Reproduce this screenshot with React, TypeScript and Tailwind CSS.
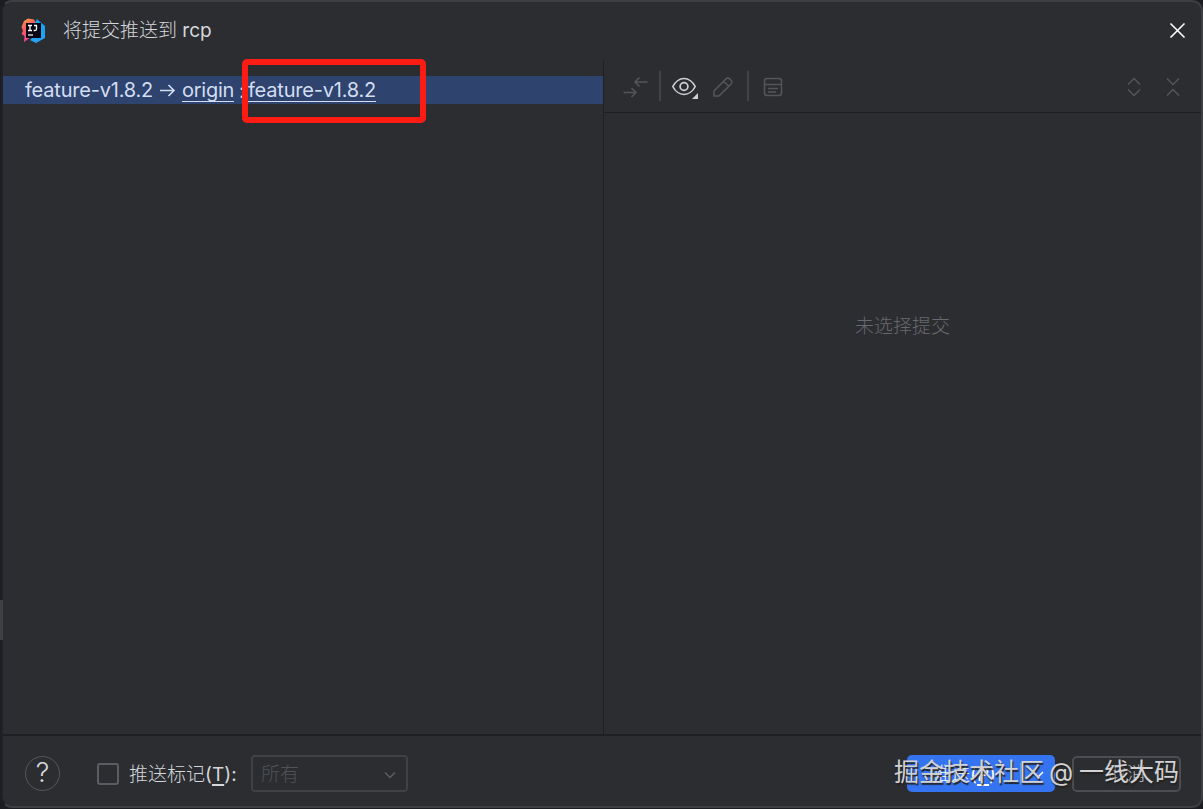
import type { ReactNode } from 'react';

function IdeaLogo() {
  return (
    <svg width="25" height="26" viewBox="0 0 25 26" className="shrink-0">
      <defs>
        <linearGradient id="warm" x1="0" y1="0" x2="0.4" y2="1">
          <stop offset="0" stopColor="#fdb43b" />
          <stop offset="0.4" stopColor="#f9605f" />
          <stop offset="1" stopColor="#f0429a" />
        </linearGradient>
        <linearGradient id="cool" x1="0" y1="0" x2="0" y2="1">
          <stop offset="0" stopColor="#12a6f5" />
          <stop offset="1" stopColor="#27a0f5" />
        </linearGradient>
      </defs>
      <path d="M3 3 7 .5l6 1 2 3.500-5 14-7 5 .5-6L.5 16l1.500-3L.5 9Z" fill="url(#warm)" />
      <path d="m16 1 2.500 2.500L24 8v12l-9 5-6-3 6-6-1-11Z" fill="url(#cool)" />
      <path d="M5 5h15v15H5z" fill="#090613" />
      <path d="M7 7.500h4M9 7.500v5M7 12.500h4M13 7.500h3M15.500 7.500v3.500q0 1.500-1.500 1.500h-1.300" fill="none" stroke="#fff" strokeWidth="1.3" />
      <path d="M7 17h5" stroke="#fff" strokeWidth="1.2" />
    </svg>
  );
}

function Icon({ size = 20, className = '', children }: { size?: number; className?: string; children: ReactNode }) {
  return (
    <svg
      width={size}
      height={size}
      viewBox={`0 0 ${size} ${size}`}
      fill="none"
      stroke="currentColor"
      strokeWidth="1.5"
      className={`shrink-0 overflow-visible ${className}`}
    >
      {children}
    </svg>
  );
}

function TitleBar() {
  return (
    <div className="flex h-[58px] shrink-0 items-center pr-[15px] pl-[18px]">
      <IdeaLogo />
      <span className="ml-[17px] text-[#d5d7dc]">
        <span className="font-light">将提交推送到</span> rcp
      </span>
      <Icon size={16} className="ml-auto text-white">
        <path d="m.5 .5 14 14M14.500 .5l-14 14" strokeWidth="1.6" />
      </Icon>
    </div>
  );
}

function BranchList() {
  return (
    <div className="w-[600px] shrink-0 pt-[16px]">
      <div className="relative flex h-[28px] items-center bg-[#2e436e] pl-[22px] text-[20px] whitespace-nowrap text-[#d3def1]">
        <span className="w-[128px] tracking-[-0.2px]">feature-v1.8.2</span>
        <Icon size={16} className="ml-[6px]">
          <path d="M1 8.500h14M9.500 3l5.500 5.500L9.500 14" strokeWidth="1.6" />
        </Icon>
        <span className="ml-[7px] w-[52px] border-b border-[#d3def1] pt-px leading-[21px] tracking-[-0.25px]">origin</span>
        <span className="ml-[5px] w-[9px] pt-px">:</span>
        <span className="w-[128px] border-b border-[#d3def1] pt-px leading-[21px] tracking-[-0.2px]">feature-v1.8.2</span>
        <div className="absolute top-[-17px] left-[239px] h-[64px] w-[184px] rounded-[5px] border-[6px] border-[#fc1c14]" />
      </div>
    </div>
  );
}

function DetailsToolbar() {
  return (
    <div className="flex h-[53px] shrink-0 items-center border-b border-[#1f2023] pr-[18px] pl-[19px] text-[#54565a]">
      <Icon size={25}>
        <path d="M24.500 8H12M16.500 3.500 12 8l4.500 4.500M.5 18.500H13M8.500 14 13 18.500 8.500 23" />
      </Icon>
      <div className="ml-[11px] h-[30px] w-[2px] bg-[#414347]" />
      <Icon size={26} className="ml-[11px] text-[#ced0d6]">
        <path d="M.8 13.500C3 9 7.500 5.500 12 5.500s9 3.500 11.200 8c-2.200 4.500-6.700 8-11.200 8s-9-3.500-11.200-8Z" strokeWidth="1.7" />
        <circle cx="12" cy="13.500" r="3.900" strokeWidth="1.7" />
        <path d="M26 20v6h-6z" fill="currentColor" stroke="none" />
      </Icon>
      <Icon className="ml-[15px]">
        <path d="M1 20v-5L13.200 2.600q1.600-1.400 3.200 0l1.900 1.900q1.400 1.600 0 3.200L6 20ZM10.700 5.200l5 5" />
      </Icon>
      <div className="ml-[14px] h-[30px] w-[2px] bg-[#414347]" />
      <Icon className="ml-[14px]">
        <rect x="1.500" y="2.500" width="17" height="17" rx="2.500" />
        <path d="M1.500 8.500h17M5 12.500h10M5 16h8" />
      </Icon>
      <Icon className="ml-auto">
        <path d="m4 8.500 6-6 6 6M4 13.500l6 6 6-6" />
      </Icon>
      <Icon className="ml-[19px]">
        <path d="m4 2.500 6 6 6-6M4 19.500l6-6 6 6" />
      </Icon>
    </div>
  );
}

function Footer() {
  return (
    <div className="relative flex h-[72px] shrink-0 items-center border-t-2 border-[#1f2023] pt-[5px] pr-[20px] pl-[22px]">
      <div className="flex size-[35px] items-center justify-center rounded-full border-[1.5px] border-[#55575b] text-[27px] font-light text-[#d5d7dc]">
        ?
      </div>
      <div className="ml-[37px] size-[22px] rounded-[3px] border-2 border-[#5b5d62]" />
      <span className="ml-[10px] w-[109px] pt-[3px] whitespace-nowrap text-[#d5d7dc]">
        <span className="font-light">推送标记</span>(<span className="underline decoration-2 underline-offset-[3px]">T</span>):
      </span>
      <div className="ml-[13px] flex h-[37px] w-[157px] items-center rounded-[4px] border-2 border-[#3f4145] pr-[9px] pl-[8px] font-light text-[#505257]">
        <span className="pt-[3px]">所有</span>
        <Icon size={14} className="ml-auto text-[#5c5e62]">
          <path d="m2 5.500 5 5 5-5" strokeWidth="1.5" />
        </Icon>
      </div>
      <div className="ml-auto flex h-[37px] w-[148px] items-center rounded-[5px] bg-[#3574f0] pl-[25px] text-white">
        <span className="w-[88px] pt-[3px]">
          <span className="font-light">推送</span>(<span className="underline decoration-2 underline-offset-[3px]">P</span>)
        </span>
        <div className="h-[22px] w-px bg-[#6596f4]" />
        <Icon size={14} className="ml-[10px]">
          <path d="m2 5 5 5 5-5" />
        </Icon>
      </div>
      <div className="ml-[17px] flex h-[36px] w-[109px] items-center justify-center rounded-[5px] border-2 border-[#4b4d52] pt-[3px] font-light text-[#b5b7bc]">
        取消
      </div>
      <div className="absolute top-[21px] left-[891px] flex text-[25px] leading-[30px] whitespace-nowrap text-[#d2d2d4] [text-shadow:1px_2px_1px_#222]">
        <span className="w-[155px]">掘金技术社区</span>
        <span className="w-[30px]">@</span>
        <span>一线大码</span>
      </div>
    </div>
  );
}

export default function App() {
  return (
    <div className="relative flex h-[809px] w-[1203px] overflow-hidden bg-[#1b1d23] font-['Inter','Noto_Sans_CJK_SC',sans-serif] text-[19px]">
      <div className="absolute top-[600px] left-0 h-[40px] w-[3px] bg-[#3e4044]" />
      <div className="ml-px flex h-[808px] w-[1202px] flex-col rounded-[11px] border-2 border-[#3c3e42] border-l-[#202228] bg-[#2b2d30]">
        <TitleBar />
        <div className="flex h-[674px] shrink-0">
          <BranchList />
          <div className="flex flex-1 flex-col border-l border-[#1f2023]">
            <DetailsToolbar />
            <div className="flex h-[429px] items-center justify-center font-light text-[#67696e]">
              未选择提交
            </div>
          </div>
        </div>
        <Footer />
      </div>
    </div>
  );
}
